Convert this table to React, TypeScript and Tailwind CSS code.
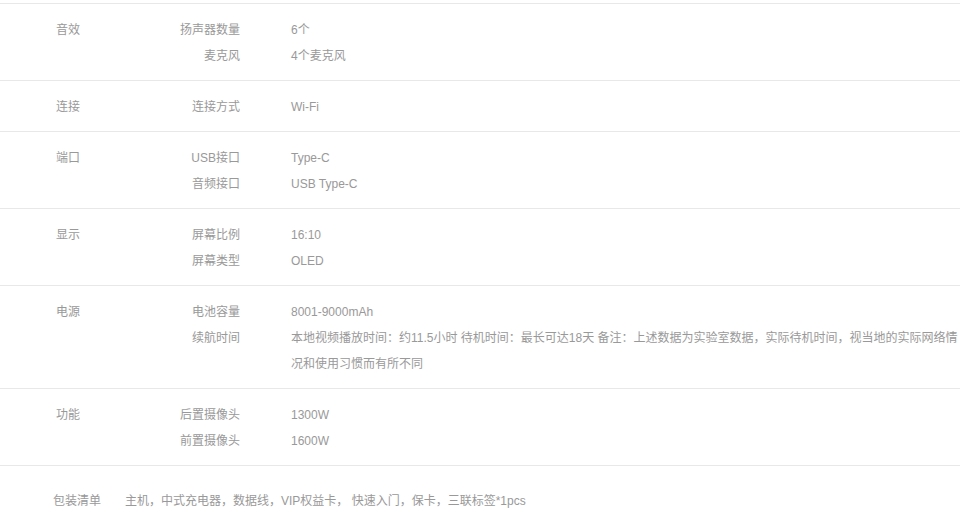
import React from 'react';

interface Spec {
  category: string;
  items: { label: string; value: string }[];
}

const specs: Spec[] = [
  {
    category: '音效',
    items: [
      { label: '扬声器数量', value: '6个' },
      { label: '麦克风', value: '4个麦克风' },
    ],
  },
  { category: '连接', items: [{ label: '连接方式', value: 'Wi-Fi' }] },
  {
    category: '端口',
    items: [
      { label: 'USB接口', value: 'Type-C' },
      { label: '音频接口', value: 'USB Type-C' },
    ],
  },
  {
    category: '显示',
    items: [
      { label: '屏幕比例', value: '16:10' },
      { label: '屏幕类型', value: 'OLED' },
    ],
  },
  {
    category: '电源',
    items: [
      { label: '电池容量', value: '8001-9000mAh' },
      {
        label: '续航时间',
        value:
          '本地视频播放时间：约11.5小时 待机时间：最长可达18天 备注：上述数据为实验室数据，实际待机时间，视当地的实际网络情况和使用习惯而有所不同',
      },
    ],
  },
  {
    category: '功能',
    items: [
      { label: '后置摄像头', value: '1300W' },
      { label: '前置摄像头', value: '1600W' },
    ],
  },
];

export default function App() {
  return (
    <div
      className="min-h-screen bg-white pt-[3px] text-[12px] leading-[26px] text-[#999]"
      style={{ fontFamily: '"Liberation Sans", "Noto Sans CJK SC", sans-serif' }}
    >
      <div className="w-[960px] border-t border-[#e8e8e8]">
        {specs.map(spec => (
          <div key={spec.category} className="flex border-b border-[#e8e8e8] pt-[13px] pb-[11px]">
            <div className="w-[180px] shrink-0 pl-[56px]">{spec.category}</div>
            <div className="flex flex-1 flex-col">
              {spec.items.map(item => (
                <div key={item.label} className="flex">
                  <div className="w-[60px] shrink-0 whitespace-nowrap text-right">{item.label}</div>
                  <div className="w-[670px] pl-[51px] box-content">{item.value}</div>
                </div>
              ))}
            </div>
          </div>
        ))}
        <div className="flex pl-[53px] pt-[22px]">
          <div className="w-[72px] shrink-0">包装清单</div>
          <div>主机，中式充电器，数据线，VIP权益卡， 快速入门，保卡，三联标签*1pcs</div>
        </div>
      </div>
    </div>
  );
}
